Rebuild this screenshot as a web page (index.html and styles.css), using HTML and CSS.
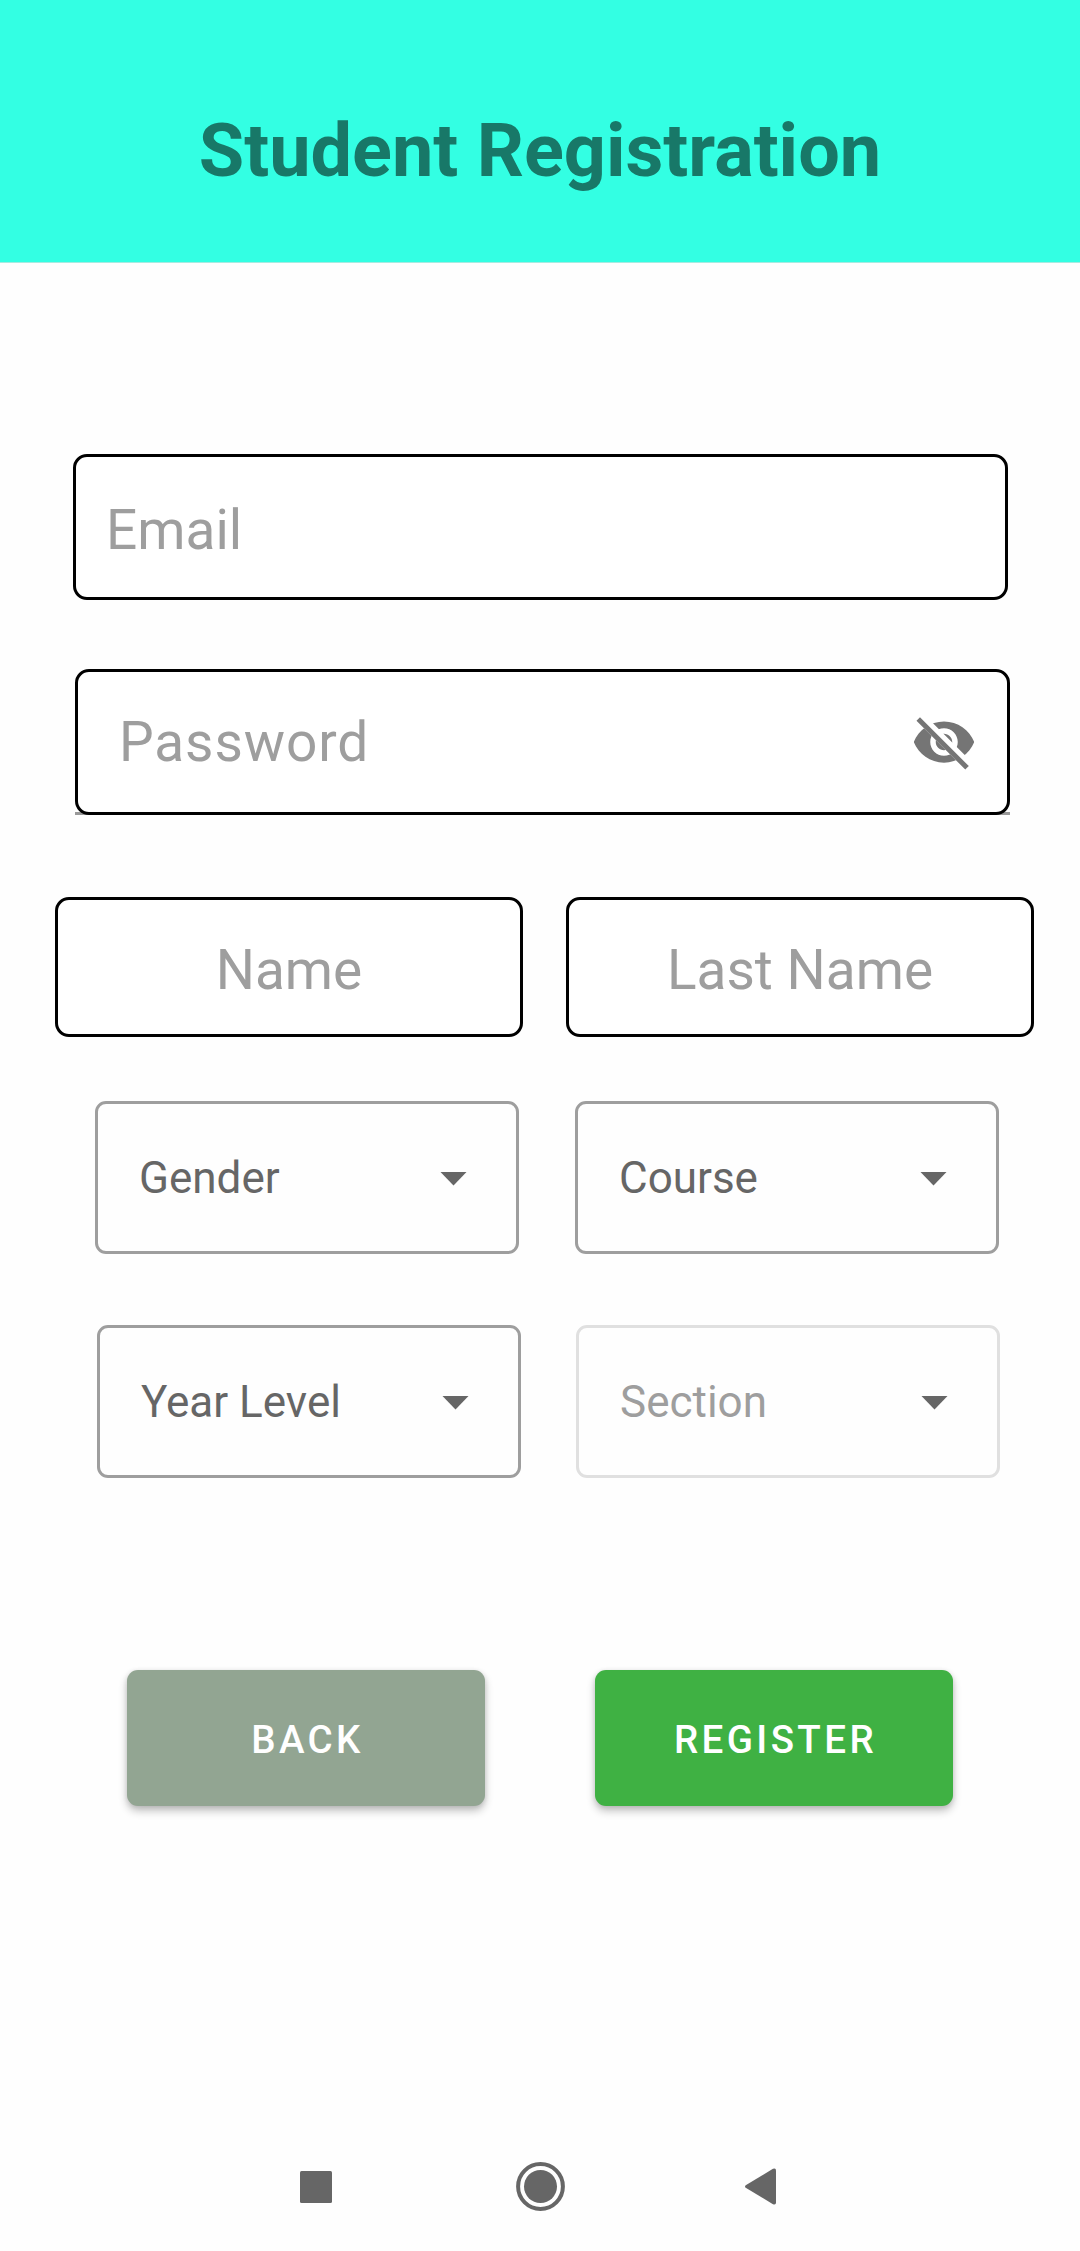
FILE: index.html
```html
<!DOCTYPE html>
<html lang="en">
<head>
<meta charset="utf-8">
<title>Student Registration</title>
<link rel="stylesheet" href="styles.css">
</head>
<body>
<header class="header"><h1 class="title">Student Registration</h1></header>
<main class="form">
  <div class="field email"><span>Email</span></div>
  <div class="password-wrap">
    <div class="field password">
      <span>Password</span>
      <svg class="eye" viewBox="0 0 24 24">
        <clipPath id="strike"><path d="M2,4.27L19.73,22L22.27,19.46L4.54,1.73V1H23V23H1V4.27Z"/></clipPath>
        <path clip-path="url(#strike)" fill="#757575" d="M12,4.5C7,4.5 2.73,7.61 1,12c1.73,4.39 6,7.5 11,7.5s9.27,-3.11 11,-7.5c-1.73,-4.39 -6,-7.5 -11,-7.5zM12,17c-2.76,0 -5,-2.24 -5,-5s2.24,-5 5,-5 5,2.24 5,5 -2.24,5 -5,5zM12,9c-1.66,0 -3,1.34 -3,3s1.34,3 3,3 3,-1.34 3,-3 -1.34,-3 -3,-3z"/>
        <path d="M3.27,4.27L19.74,20.74" stroke="#757575" stroke-width="1.8" stroke-linecap="square"/>
      </svg>
    </div>
  </div>
  <div class="names">
    <div class="field name"><span>Name</span></div>
    <div class="field name"><span>Last Name</span></div>
  </div>
  <div class="selects">
    <div class="select"><span>Gender</span><i class="arrow"></i></div>
    <div class="select"><span>Course</span><i class="arrow"></i></div>
  </div>
  <div class="selects second">
    <div class="select"><span>Year Level</span><i class="arrow"></i></div>
    <div class="select disabled"><span>Section</span><i class="arrow"></i></div>
  </div>
  <div class="actions">
    <button class="button back">BACK</button>
    <button class="button register">REGISTER</button>
  </div>
</main>
<nav class="navbar">
  <svg width="32" height="32" viewBox="0 0 32 32"><rect width="32" height="32" rx="1.5"/></svg>
  <svg width="49" height="49" viewBox="0 0 49 49"><circle cx="24.5" cy="24.5" r="22.4" class="ring"/><circle cx="24.5" cy="24.5" r="16.5"/></svg>
  <svg width="31" height="37" viewBox="0 0 31 37"><path d="M0.7,17.2L28,0.8Q31,-0.3 31,2.5V34.5Q31,37.3 28,36.2L0.7,19.8Q-0.7,18.5 0.7,17.2Z"/></svg>
</nav>
</body>
</html>
```
FILE: styles.css
```css
* { box-sizing: border-box; }

body {
  margin: 0;
  width: 1080px;
  height: 2251px;
  display: flex;
  flex-direction: column;
  background: #fefefe;
  font-family: Roboto, "Liberation Sans", sans-serif;
}

.header {
  height: 263px;
  padding-top: 101px;
  background: #33ffe3;
  border-bottom: 1px solid #a6ebe1;
}

.title {
  margin: 0;
  font-size: 73.8px;
  line-height: 100px;
  font-weight: 700;
  color: #187868;
  text-align: center;
}

.form {
  flex: 1;
  padding-top: 191px;
}

.field {
  display: flex;
  align-items: center;
  height: 146px;
  border: 3px solid #000;
  border-radius: 14px;
  background: #fff;
  font-size: 55px;
  color: #9e9e9e;
}

.email {
  width: 935px;
  margin-left: 73px;
  padding: 6px 0 0 30px;
}

.password-wrap {
  width: 935px;
  margin: 69px 0 0 75px;
  background: linear-gradient(#999, #999) bottom / 100% 3px no-repeat;
}

.password {
  justify-content: space-between;
  padding: 0 30px 0 41px;
  letter-spacing: 0.9px;
}

.eye {
  width: 66px;
  height: 66px;
}

.names {
  display: flex;
  gap: 43px;
  margin: 82px 0 0 55px;
}

.name {
  width: 468px;
  height: 140px;
  padding-top: 6px;
  justify-content: center;
}

.selects {
  display: flex;
  gap: 56px;
  margin: 64px 0 0 95px;
}

.second {
  gap: 55px;
  margin: 71px 0 0 97px;
}

.select {
  display: flex;
  align-items: center;
  justify-content: space-between;
  width: 424px;
  height: 153px;
  padding: 0 49px 0 41px;
  border: 3px solid #9e9e9e;
  border-radius: 11px;
  font-size: 44px;
  color: #666;
}

.disabled {
  border-color: #e0e0e0;
  color: #9e9e9e;
}

.arrow {
  width: 27px;
  height: 14px;
  margin-top: 2px;
  background: #666;
  clip-path: polygon(0 0, 100% 0, 50% 100%);
}

.actions {
  display: flex;
  gap: 110px;
  margin: 192px 0 0 127px;
}

.button {
  width: 358px;
  height: 136px;
  padding: 3px 0 0 3px;
  border: 0;
  border-radius: 11px;
  font: 500 38.5px Roboto, "Liberation Sans", sans-serif;
  letter-spacing: 3.4px;
  color: #fff;
  box-shadow: 0 5px 8px rgba(0, 0, 0, 0.24), 0 1px 5px rgba(0, 0, 0, 0.1);
}

.back { background: #92a592; }
.register { background: #3fb143; }

.navbar {
  display: flex;
  align-items: center;
  gap: 184px;
  height: 129px;
  padding-left: 300px;
  fill: #666;
}

.navbar svg:last-child { margin-left: -4px; }

.ring {
  fill: none;
  stroke: #666;
  stroke-width: 4;
}
```
